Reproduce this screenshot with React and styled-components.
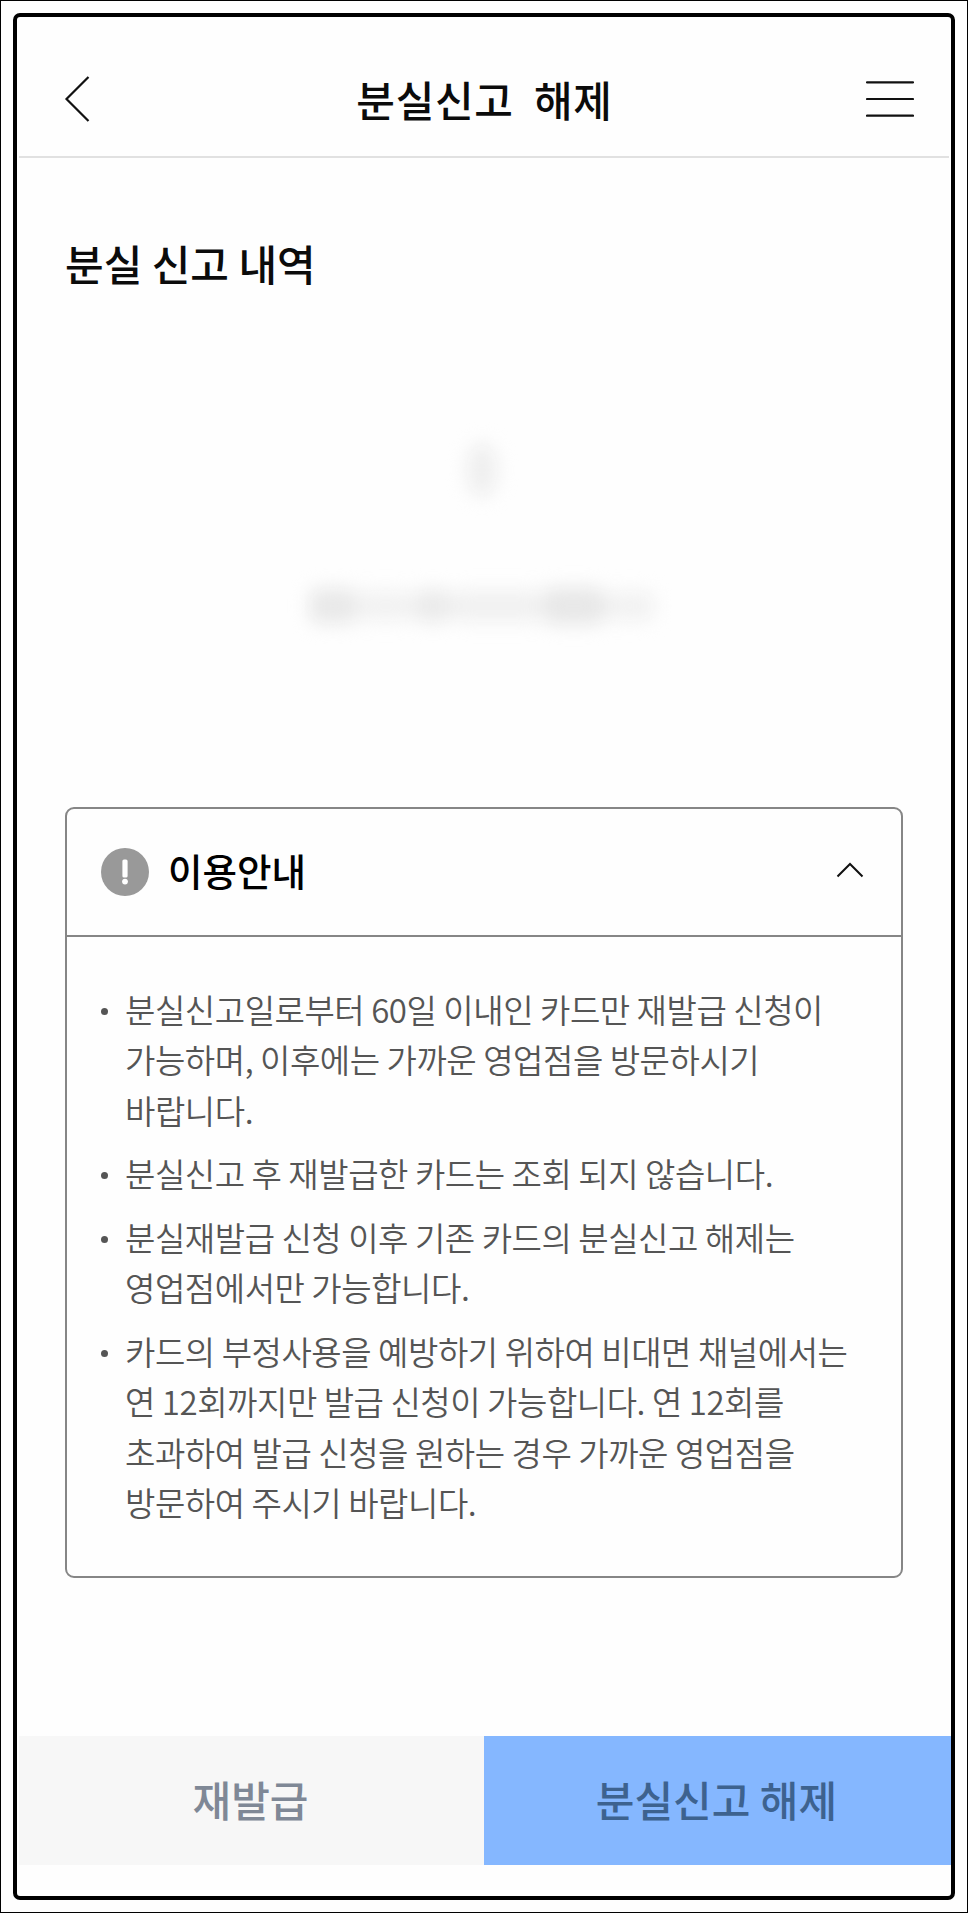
import React from 'react';
import styled, { createGlobalStyle } from 'styled-components';

const GlobalStyle = createGlobalStyle`
  * {
    box-sizing: border-box;
  }

  body {
    margin: 0;
    background: #fefefe;
    font-family: 'Noto Sans CJK KR', 'Noto Sans', sans-serif;
  }
`;

const notices = [
  ['분실신고일로부터 60일 이내인 카드만 재발급 신청이', '가능하며, 이후에는 가까운 영업점을 방문하시기', '바랍니다.'],
  ['분실신고 후 재발급한 카드는 조회 되지 않습니다.'],
  ['분실재발급 신청 이후 기존 카드의 분실신고 해제는', '영업점에서만 가능합니다.'],
  [
    '카드의 부정사용을 예방하기 위하여 비대면 채널에서는',
    '연 12회까지만 발급 신청이 가능합니다. 연 12회를',
    '초과하여 발급 신청을 원하는 경우 가까운 영업점을',
    '방문하여 주시기 바랍니다.',
  ],
];

// width, height and grey level of each smudge in the masked message
const smudges = [
  { w: 48, h: 36, tone: '#e9e9e9' },
  { w: 58, h: 30, tone: '#f2f2f2' },
  { w: 36, h: 34, tone: '#ebebeb' },
  { w: 92, h: 32, tone: '#f1f1f1' },
  { w: 62, h: 38, tone: '#e8e8e8' },
  { w: 50, h: 30, tone: '#f2f2f2' },
];

const Page = styled.div`
  width: 968px;
  height: 1913px;
  padding: 12px;
  border: 1px solid #000;
`;

const Frame = styled.div`
  display: flex;
  flex-direction: column;
  width: 942px;
  height: 1887px;
  border: 4px solid #000;
  border-radius: 7px;
`;

const Header = styled.header`
  display: flex;
  align-items: center;
  justify-content: space-between;
  height: 141px;
  margin: 0 2px;
  padding: 24px 35px 0 45px;
  border-bottom: 2px solid #e1e1e1;
`;

const IconButton = styled.button`
  display: flex;
  padding: 0;
  border: 0;
  background: none;
`;

const HeaderTitle = styled.h1`
  margin: 0 0 0 13px;
  color: #0b0b0b;
  font-size: 42px;
  font-weight: 500;
  line-height: 60px;
  letter-spacing: 0.7px;
  white-space: pre;
`;

const Content = styled.main`
  flex: 1;
  padding: 74px 48px 0;
`;

const SectionTitle = styled.h2`
  margin: 0;
  color: #0b0b0b;
  font-size: 42px;
  font-weight: 500;
  line-height: 62px;
`;

const Masked = styled.div`
  display: flex;
  flex-direction: column;
  align-items: center;
  height: 513px;
  padding: 148px 4px 0 0;
`;

const MaskedIcon = styled.div`
  width: 32px;
  height: 56px;
  border-radius: 50%;
  background: #efefef;
  filter: blur(9px);
`;

const MaskedText = styled.div`
  display: flex;
  align-items: center;
  height: 40px;
  margin-top: 88px;
  filter: blur(9px);
`;

const Smudge = styled.span`
  width: ${props => props.$w}px;
  height: ${props => props.$h}px;
  border-radius: 10px;
  background: ${props => props.$tone};
`;

const Card = styled.section`
  width: 838px;
  height: 771px;
  border: 2px solid #868686;
  border-radius: 9px;
`;

const CardHeader = styled.div`
  display: flex;
  align-items: center;
  height: 128px;
  padding: 0 37px 0 34px;
  border-bottom: 2px solid #868686;
`;

const CardTitle = styled.h3`
  flex: 1;
  margin: -4px 0 0 19px;
  color: #000;
  font-size: 37.5px;
  font-weight: 500;
  line-height: 56px;
`;

const ToggleButton = styled(IconButton)`
  margin-bottom: 5px;
`;

const NoticeList = styled.ul`
  display: flex;
  flex-direction: column;
  gap: 13.4px;
  margin: 0;
  padding: 47px 0 0 34px;
  list-style: none;
`;

const NoticeItem = styled.li`
  display: flex;
  color: #555;
  font-size: 33px;
  font-weight: 350;
  line-height: 50.3px;
  letter-spacing: -0.45px;
  white-space: nowrap;

  &::before {
    content: '';
    flex: none;
    width: 7px;
    height: 7px;
    margin: 24px 17px 0 0;
    border-radius: 50%;
    background: #555;
  }
`;

const Line = styled.div``;

const Footer = styled.footer`
  display: flex;
  height: 129px;
  margin: 0 0 31px 2px;
`;

const FooterButton = styled.button`
  flex: ${props => (props.$primary ? '1' : '0 0 465px')};
  padding: 0 2px 3px 0;
  border: 0;
  background: ${props => (props.$primary ? '#85b7ff' : '#f7f7f7')};
  color: ${props => (props.$primary ? '#3d628f' : '#7f8896')};
  font-family: inherit;
  font-size: 42px;
  font-weight: 500;
  line-height: 60px;
`;

const BackIcon = () => (
  <svg width="26" height="48" viewBox="0 0 26 48" fill="none" stroke="#111" strokeWidth="2.2">
    <path d="M24.5 2 2.5 24l22 22" />
  </svg>
);

const MenuIcon = () => (
  <svg width="48" height="36" viewBox="0 0 48 36" fill="none" stroke="#111" strokeWidth="2.2" strokeLinecap="round">
    <path d="M1 1.3h46M1 18h46M1 34.7h46" />
  </svg>
);

const InfoIcon = () => (
  <svg width="48" height="48" viewBox="0 0 48 48">
    <circle cx="24" cy="24" r="24" fill="#999" />
    <rect x="21.4" y="11.5" width="5.2" height="18" rx="1.6" fill="#fff" />
    <circle cx="24" cy="33.6" r="2.9" fill="#fff" />
  </svg>
);

const CollapseIcon = () => (
  <svg width="28" height="16" viewBox="0 0 28 16" fill="none" stroke="#111" strokeWidth="2">
    <path d="M1.5 14.5 14 2l12.5 12.5" />
  </svg>
);

const App = () => (
  <>
    <GlobalStyle />
    <Page>
      <Frame>
        <Header>
          <IconButton aria-label="이전"><BackIcon /></IconButton>
          <HeaderTitle>분실신고{'  '}해제</HeaderTitle>
          <IconButton aria-label="메뉴"><MenuIcon /></IconButton>
        </Header>
        <Content>
          <SectionTitle>분실 신고 내역</SectionTitle>
          <Masked>
            <MaskedIcon />
            <MaskedText>
              {smudges.map(({ w, h, tone }, i) => <Smudge key={i} $w={w} $h={h} $tone={tone} />)}
            </MaskedText>
          </Masked>
          <Card>
            <CardHeader>
              <InfoIcon />
              <CardTitle>이용안내</CardTitle>
              <ToggleButton aria-label="접기"><CollapseIcon /></ToggleButton>
            </CardHeader>
            <NoticeList>
              {notices.map((lines) => (
                <NoticeItem key={lines[0]}>
                  <div>
                    {lines.map((line) => <Line key={line}>{line}</Line>)}
                  </div>
                </NoticeItem>
              ))}
            </NoticeList>
          </Card>
        </Content>
        <Footer>
          <FooterButton>재발급</FooterButton>
          <FooterButton $primary>분실신고 해제</FooterButton>
        </Footer>
      </Frame>
    </Page>
  </>
);

export default App;
